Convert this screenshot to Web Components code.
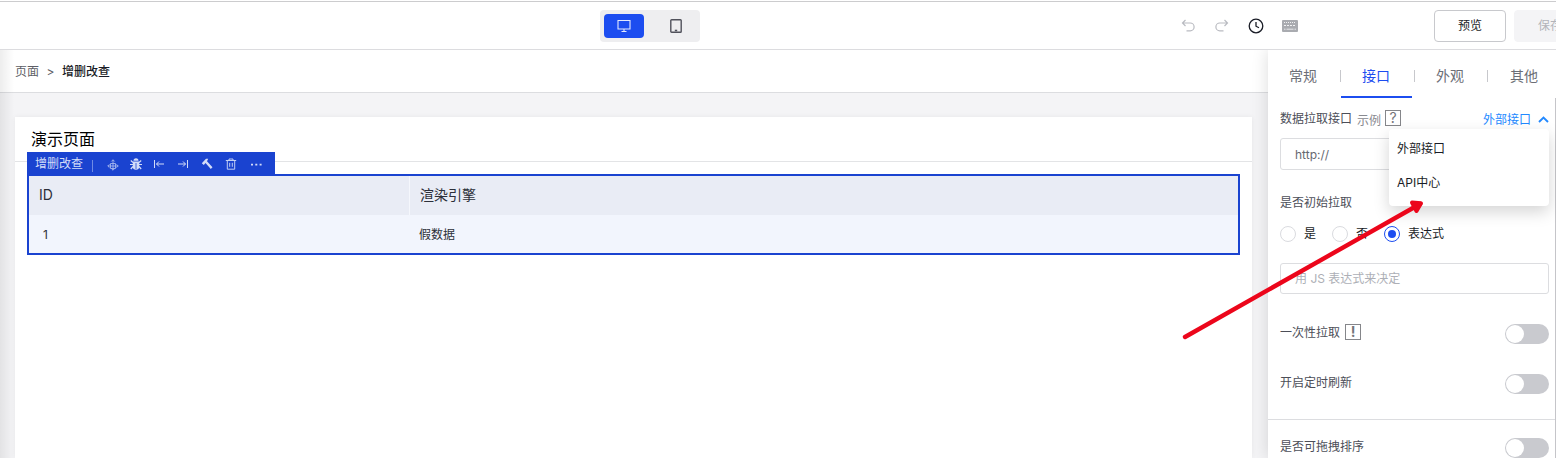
<!DOCTYPE html>
<html lang="zh-CN">
<head>
<meta charset="utf-8">
<title>页面编辑器</title>
<style>
html,body{margin:0;height:458px;overflow:hidden;background:#fff}
body{font-family:Inter,"Noto Sans CJK SC",sans-serif;font-size:12px;line-height:20px;color:#191c26}
</style>
</head>
<body>
<page-editor></page-editor>
<script>
const define=(name,html)=>{
  const t=document.createElement('template');
  t.innerHTML='<style>*{box-sizing:border-box}:host{box-sizing:border-box}svg{display:block;fill:none;stroke:currentColor}</style>'+html;
  customElements.define(name,class extends HTMLElement{
    constructor(){super();this.attachShadow({mode:'open'}).append(t.content.cloneNode(true));}
  });
};

define('top-bar',`<style>
:host{display:grid;grid-template-columns:600px 100px 1fr;align-items:center;height:50px;border-bottom:1px solid #dcdcdf;background:linear-gradient(#fff 1px,#ccccce 1px,#ccccce 2px,#fff 2px);overflow:hidden}
.device{grid-column:2;display:flex;justify-content:space-between;height:32px;padding:4px;border-radius:4px;background:#eeeef0;margin-top:3px}
.device span{width:40px;height:24px;display:grid;place-items:center;border-radius:4px;color:#50515b}
.device .on{background:#1c4df0;color:#e3e9fd}
.tools{display:flex;align-items:center;height:32px;margin-top:3px;padding-left:480px;white-space:nowrap}
.ic{width:34px;display:flex;color:#b9bbc1;flex:none}
.ic svg{width:16px;height:16px}
button{font:inherit;line-height:20px;flex:none;width:72px;height:32px;padding:0;border-radius:4px;border:1px solid #c8c9cd;background:#fff;color:#191c26}
.save{margin-left:8px;border-color:#f4f4f6;background:#f4f4f6;color:#b3b4ba}
</style>
<div class="device"><span class="on"><svg width="14" height="14" viewBox="0 0 14 14"><path d="M1 1.500h12v8.500H1zM7 10v2.500M4.500 12.500h5" stroke-width="1.100"/></svg></span><span><svg width="12" height="14" viewBox="0 0 12 14"><rect x=".8" y=".8" width="10.4" height="12.4" rx=".8" stroke-width="1.4"/><path d="M4.800 11.500h2.400" stroke-width="1.600"/></svg></span></div>
<div class="tools">
<span class="ic"><svg viewBox="0 0 16 16"><path d="M5.500 2 2.500 5l3 3M2.700 5h7.500a3.900 3.900 0 0 1 0 7.800H6.500" stroke-width="1.200"/></svg></span>
<span class="ic"><svg viewBox="0 0 16 16"><path d="m10.500 2 3 3-3 3M13.300 5H5.800a3.900 3.900 0 0 0 0 7.800h3.700" stroke-width="1.200"/></svg></span>
<span class="ic" style="color:#191c26"><svg viewBox="0 0 16 16"><circle cx="8" cy="8" r="6.800" stroke-width="1.300"/><path d="M8 4v4.200l3 1.600" stroke-width="1.300"/></svg></span>
<span class="ic" style="width:152px"><svg viewBox="0 0 16 16"><rect width="16" height="12" y="2" rx="1" fill="#a9abb0" stroke="none"/><path d="M2 4.500h12" stroke="#f2f2f3" stroke-dasharray="1 1"/><path d="M2 7.500h12" stroke="#f2f2f3" stroke-dasharray="2 1"/><path d="M2 11.200h1.500M4.500 11.200h7M12.500 11.200H14" stroke="#e8e8ea"/></svg></span>
<button>预览</button><button class="save">保存</button></div>`);

define('bread-crumb',`<style>:host{display:flex;align-items:center;height:43px;padding:1px 15px 0;border-bottom:1px solid #dcdde0;background:#fff;color:#5d5e66}
i{font-style:normal;width:23px;text-align:center}b{font-weight:500;color:#191c26}</style><span>页面</span><i>&gt;</i><b><slot></slot></b>`);

define('widget-toolbar',`<style>:host{display:flex;align-items:center;width:248px;height:22px;padding:2px 11px 0 8px;background:#1a43d0;color:#d3dcf8}
span{width:57px;height:20px}i{width:1px;height:12px;margin-right:13px;background:#6f8be4;margin-top:3px}svg{width:12px;height:12px;flex:none;margin-right:12px}svg:last-child{margin:0}</style>
<span><slot></slot></span><i></i>
<svg viewBox="0 0 12 12" stroke-width=".9" style="opacity:.75;margin:2px 11px 0 1px"><path d="M6 .8v10.400M.8 7h10.400M4.300 2.500 6 .8l1.700 1.700M2.500 5.300.8 7l1.700 1.700M9.500 5.300 11.200 7 9.500 8.700M4.300 9.500 6 11.200l1.700-1.700M3.500 4.500h5v5h-5z"/></svg>
<svg viewBox="0 0 12 12" style="margin-right:11px"><path d="M3.500 2.800a2.500 2.500 0 0 1 5 0zM2.800 3.500h6.400v5a3.200 3.200 0 0 1-6.400 0z" fill="currentColor" stroke="none"/><path d="M3 4.500.8 2.500M9 4.500l2.200-2M3 6.500H0M9 6.500h3M3 8.500.8 11M9 8.500l2.200 2.500" stroke-width="1.200"/><path d="M6 5v6" stroke="#1a43d0" stroke-width=".8"/></svg>
<svg viewBox="0 0 12 12"><path d="M1.500 2v8M3.500 6H11M6 3.500 3.500 6 6 8.500"/></svg>
<svg viewBox="0 0 12 12"><path d="M10.500 2v8M1 6h7.500M6 3.500 8.500 6 6 8.500"/></svg>
<svg viewBox="0 0 12 12"><path d="M.8 5.300 5 .8h2.200L6 3.300l5.500 6-1.700 1.700-5.300-6-1.700 2z" fill="currentColor" stroke="none"/></svg>
<svg viewBox="0 0 12 12" style="margin-right:14px"><path d="M.8 2.500h10.400M4 2.500V1h4v1.500M2.300 2.500v8.700h7.400V2.500M4.700 4.800v4M7.300 4.800v4" stroke-width=".9"/></svg>
<svg viewBox="0 0 12 12"><path d="M0 6.700h2M4.300 6.700h2M8.600 6.700h2" stroke-width="1.800"/></svg>`);

define('data-grid',`<style>:host{display:grid;grid-template-columns:381px 1fr;grid-template-rows:39px 38px;width:1213px;height:81px;border:2px solid #1a43d0;background:#f2f5fd}
div{display:flex;align-items:center;padding:2px 0 0 10px;color:#2c2f39}
.h{background:#e9ecf5;font-size:14px;padding:0 0 1px 10px}style+.h{border-right:1px solid #f5f7fc}</style>
<div class="h">ID</div><div class="h">渲染引擎</div><div style="padding-left:14px">1</div><div style="padding-left:9px">假数据</div>`);

define('design-canvas',`<style>:host{display:block;height:365px;padding:24px 16px 0 15px;background:#f4f4f6}
.card{height:341px;background:#fff;box-shadow:0 0 5px #0000000f}
h1{margin:0;height:45px;padding:10px 16px 0;border-bottom:1px solid #e3e4e6;font-size:16px;line-height:24px;font-weight:400;color:#000}
.w{position:relative;padding:12px 12px 0}
widget-toolbar{position:absolute;left:12px;top:-10px}</style>
<div class="card"><h1>演示页面</h1><div class="w"><widget-toolbar>增删改查</widget-toolbar><data-grid></data-grid></div></div>`);

define('tab-bar',`<style>:host{display:grid;grid-template-columns:73px 74px 73px 68px;height:48px;font-size:14px;color:#6c6e76;overflow:hidden}
div{position:relative;display:flex;align-items:center;padding:4px 0 0 21px}
div+div::before{content:"";position:absolute;left:-1px;top:20px;width:1px;height:12px;background:#c7c8cc}
.on{color:#1c4df0}.on::after{content:"";position:absolute;left:0;bottom:0;width:71px;height:2px;background:#1c4df0}</style>
<div>常规</div><div class="on">接口</div><div>外观</div><div style="padding-left:22px">其他</div>`);

define('toggle-switch',`<style>:host{display:block;flex:none;width:44px;height:20px;padding:1px;border-radius:10px;background:#c9cacf}i{display:block;width:18px;height:18px;border-radius:9px;background:#fff}</style><i></i>`);
define('switch-row',`<style>:host{display:flex;align-items:center;justify-content:space-between;height:50px;color:#4c4e58}div{display:flex;align-items:center;height:20px;margin-top:-2px}</style><div><slot></slot></div><toggle-switch></toggle-switch>`);
define('mark-box',`<style>:host{display:inline-flex;align-items:center;justify-content:center;width:16px;height:16px;margin-left:5px;border:1px solid #85868a;color:#74757a;font-size:14px;line-height:14px}</style><slot></slot>`);
define('text-field',`<style>:host{display:flex;align-items:center;height:32px;padding:1px 14px 0;border:1px solid #dcdde0;border-radius:3px;color:#666870}</style><slot></slot>`);
define('radio-item',`<style>:host{display:flex;align-items:center;color:#191c26}i{display:grid;place-items:center;width:16px;height:16px;margin-right:8px;border:1px solid #dadbdf;border-radius:50%}
:host([checked]) i{border-color:#1c4df0}:host([checked]) i::after{content:"";width:8px;height:8px;border-radius:50%;background:#1c4df0}</style><i></i><slot></slot>`);
define('drop-menu',`<style>:host{display:block;width:160px;height:77px;padding:3px 8px;border-radius:4px;background:#fff;box-shadow:0 6px 16px #0000002b;line-height:34px;color:#191c26}div{height:34px}</style><div>外部接口</div><div>API中心</div>`);

define('setting-panel',`<style>
:host{display:block;position:relative;height:408px;background:#fff;box-shadow:0 0 16px #00000024;color:#4c4e58}
.body{padding:0 6px 0 12px;border-right:1px solid #c5c5c9;height:360px}
.head{display:flex;align-items:center;height:40px;position:relative}
.head>span{padding-top:2px}
small{font-size:12px;color:#898a90;margin-left:5px;padding-top:5px}.head mark-box{margin-left:4px}
.link{display:flex;align-items:center;gap:7px;margin-left:auto;color:#2389ff;padding-top:4px}
drop-menu{position:absolute;top:31px;right:0;z-index:1}
.label{margin-top:23px;height:20px}.radios{display:flex;height:42px;gap:16px}
.second{height:31px;margin-top:8px;color:#adafb6}
.rows{padding-top:15px}
.divider{height:1px;margin:10px -6px 3px -12px;background:#dcdde0}
</style><tab-bar></tab-bar><div class="body"><div class="head"><span>数据拉取接口</span><small>示例</small><mark-box>?</mark-box><div class="link">外部接口<svg width="11" height="8" viewBox="0 0 11 8"><path d="m1 6 4.500-4.500L10 6" stroke-width="1.900"/></svg></div><drop-menu></drop-menu></div>
<text-field>http://</text-field><div class="label">是否初始拉取</div><div class="radios"><radio-item>是</radio-item><radio-item>否</radio-item><radio-item checked>表达式</radio-item></div>
<text-field class="second">用 JS 表达式来决定</text-field><div class="rows"><switch-row>一次性拉取<mark-box style="margin-top:-2px"><b>!</b></mark-box></switch-row><switch-row>开启定时刷新</switch-row></div><div class="divider"></div><switch-row>是否可拖拽排序</switch-row></div>`);

define('pointer-arrow',`<style>:host{position:absolute;left:1170px;top:190px;z-index:5;color:#ec061b;pointer-events:none}</style><svg width="270" height="160" viewBox="0 0 270 160"><path d="M15 147 250 14" stroke-width="4.400" stroke-linecap="round"/><path d="M242 12.500l9 .8-4.500 7.700z" fill="currentColor" stroke-width="4" stroke-linejoin="round"/></svg>`);

define('page-editor',`<style>:host{display:block;position:relative;width:1556px;height:458px;overflow:hidden}
main{display:grid;grid-template-columns:1268px 288px;height:408px;overflow:hidden}
.left{position:relative}.left::after{content:"";position:absolute;inset:0 auto 0 0;width:14px;background:linear-gradient(90deg,#00000012,#0000)}
</style><top-bar></top-bar><main><div class="left"><bread-crumb>增删改查</bread-crumb><design-canvas></design-canvas></div><setting-panel></setting-panel></main><pointer-arrow></pointer-arrow>`);
</script>
</body>
</html>
